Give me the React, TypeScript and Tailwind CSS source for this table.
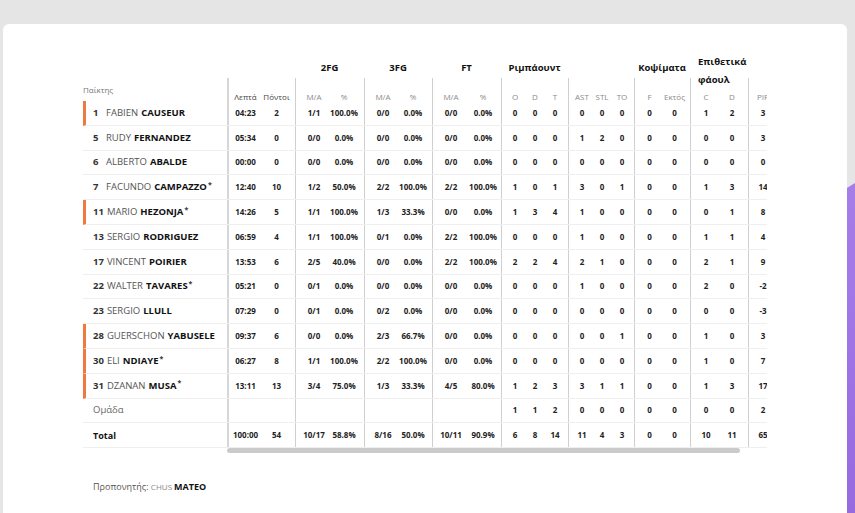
type Group = {
  label: string;
  w: string;
  box: string;
  cell: string;
  heads: string[];
  dark?: boolean;
  left?: boolean;
};

const groups: Group[] = [
  { label: "", w: "w-[68px]", box: "border-l-2 border-[#d6d6d6] pl-[1px]", cell: "w-[31px]", heads: ["Λεπτά", "Πόντοι"], dark: true },
  { label: "2FG", w: "w-[69px]", box: "border-l border-[#cfcfcf] pl-[3px]", cell: "w-[30px]", heads: ["M/A", "%"] },
  { label: "3FG", w: "w-[68px]", box: "border-l border-[#cfcfcf] pl-[3px]", cell: "w-[30px]", heads: ["M/A", "%"] },
  { label: "FT", w: "w-[69px]", box: "border-l border-[#cfcfcf] pl-[2px]", cell: "w-[32px]", heads: ["M/A", "%"] },
  { label: "Ριμπάουντ", w: "w-[67px]", box: "border-l border-[#cfcfcf] pl-[3px]", cell: "w-[20px]", heads: ["O", "D", "T"] },
  { label: "", w: "w-[66px]", box: "border-l border-[#cfcfcf] pl-[3px]", cell: "w-[20px]", heads: ["AST", "STL", "TO"] },
  { label: "Κοψίματα", w: "w-[56px]", box: "border-l border-[#cfcfcf] pl-[2px]", cell: "w-[25px]", heads: ["F", "Εκτός"] },
  { label: "Επιθετικά φάουλ", w: "w-[58px]", box: "border-l border-[#cfcfcf] pl-[2px]", cell: "w-[26px]", heads: ["C", "D"], left: true },
  { label: "", w: "w-[47px]", box: "border-l border-[#cfcfcf]", cell: "w-[28px]", heads: ["PIR"] },
];

type Row = {
  no?: string;
  first?: string;
  last: string;
  star?: boolean;
  bar?: boolean;
  kind?: "team" | "total";
  v: string[];
};

const rows: Row[] = [
  { no: "1", first: "FABIEN", last: "CAUSEUR", bar: true, v: ["04:23", "2", "1/1", "100.0%", "0/0", "0.0%", "0/0", "0.0%", "0", "0", "0", "0", "0", "0", "0", "0", "1", "2", "3"] },
  { no: "5", first: "RUDY", last: "FERNANDEZ", v: ["05:34", "0", "0/0", "0.0%", "0/0", "0.0%", "0/0", "0.0%", "0", "0", "0", "1", "2", "0", "0", "0", "0", "0", "3"] },
  { no: "6", first: "ALBERTO", last: "ABALDE", v: ["00:00", "0", "0/0", "0.0%", "0/0", "0.0%", "0/0", "0.0%", "0", "0", "0", "0", "0", "0", "0", "0", "0", "0", "0"] },
  { no: "7", first: "FACUNDO", last: "CAMPAZZO", star: true, v: ["12:40", "10", "1/2", "50.0%", "2/2", "100.0%", "2/2", "100.0%", "1", "0", "1", "3", "0", "1", "0", "0", "1", "3", "14"] },
  { no: "11", first: "MARIO", last: "HEZONJA", star: true, bar: true, v: ["14:26", "5", "1/1", "100.0%", "1/3", "33.3%", "0/0", "0.0%", "1", "3", "4", "1", "0", "0", "0", "0", "0", "1", "8"] },
  { no: "13", first: "SERGIO", last: "RODRIGUEZ", v: ["06:59", "4", "1/1", "100.0%", "0/1", "0.0%", "2/2", "100.0%", "0", "0", "0", "1", "0", "0", "0", "0", "1", "1", "4"] },
  { no: "17", first: "VINCENT", last: "POIRIER", v: ["13:53", "6", "2/5", "40.0%", "0/0", "0.0%", "2/2", "100.0%", "2", "2", "4", "2", "1", "0", "0", "0", "2", "1", "9"] },
  { no: "22", first: "WALTER", last: "TAVARES", star: true, v: ["05:21", "0", "0/1", "0.0%", "0/0", "0.0%", "0/0", "0.0%", "0", "0", "0", "1", "0", "0", "0", "0", "2", "0", "-2"] },
  { no: "23", first: "SERGIO", last: "LLULL", v: ["07:29", "0", "0/1", "0.0%", "0/2", "0.0%", "0/0", "0.0%", "0", "0", "0", "0", "0", "0", "0", "0", "0", "0", "-3"] },
  { no: "28", first: "GUERSCHON", last: "YABUSELE", bar: true, v: ["09:37", "6", "0/0", "0.0%", "2/3", "66.7%", "0/0", "0.0%", "0", "0", "0", "0", "0", "1", "0", "0", "1", "0", "3"] },
  { no: "30", first: "ELI", last: "NDIAYE", star: true, bar: true, v: ["06:27", "8", "1/1", "100.0%", "2/2", "100.0%", "0/0", "0.0%", "0", "0", "0", "0", "0", "0", "0", "0", "1", "0", "7"] },
  { no: "31", first: "DZANAN", last: "MUSA", star: true, bar: true, v: ["13:11", "13", "3/4", "75.0%", "1/3", "33.3%", "4/5", "80.0%", "1", "2", "3", "3", "1", "1", "0", "0", "1", "3", "17"] },
  { last: "Ομάδα", kind: "team", v: ["", "", "", "", "", "", "", "", "1", "1", "2", "0", "0", "0", "0", "0", "0", "0", "2"] },
  { last: "Total", kind: "total", v: ["100:00", "54", "10/17", "58.8%", "8/16", "50.0%", "10/11", "90.9%", "6", "8", "14", "11", "4", "3", "0", "0", "10", "11", "65"] },
];

function NameCell({ r }: { r: Row }) {
  if (r.kind === "team") return <span className="text-[9.5px] text-[#666]">{r.last}</span>;
  if (r.kind === "total") return <span className="text-[9px] font-bold text-[#111]">{r.last}</span>;
  return (
    <span className="flex items-center whitespace-nowrap text-[9.5px]">
      <span className="mr-[3px] inline-block min-w-[10px] font-bold text-[#333]">{r.no}</span>
      <span className="text-[#555]">{r.first}</span>
      <span className="ml-[3px] font-bold text-[#111]">{r.last}</span>
      {r.star && <span className="-mt-[4px] ml-[1px] text-[7px] font-bold text-[#333]">*</span>}
    </span>
  );
}

function StatRow({ r }: { r: Row }) {
  let i = 0;
  return (
    <div className="flex h-[24.8px] border-b border-[#efefef]">
      {groups.map((g, gi) => (
        <div key={gi} className={`flex shrink-0 items-center ${g.w} ${g.box}`}>
          {g.heads.map((_, hi) => {
            const val = r.v[i++];
            return (
              <div key={hi} className={`${g.cell} text-center text-[8px] font-bold text-[#222]`}>
                {val}
              </div>
            );
          })}
        </div>
      ))}
      <div className="w-[19px] shrink-0" />
    </div>
  );
}

export default function App() {
  return (
    <div className="relative min-h-[513px] overflow-hidden bg-[#e5e5e5] font-['Open_Sans',sans-serif]">
      <svg className="absolute right-0 top-[150px] h-[363px] w-[60px]" viewBox="0 0 60 363" preserveAspectRatio="none">
        <defs>
          <linearGradient id="pg" x1="0" y1="0" x2="0" y2="1">
            <stop offset="0" stopColor="#a77de9" />
            <stop offset="1" stopColor="#976ae0" />
          </linearGradient>
        </defs>
        <polygon points="0,70 60,33 60,363 0,363" fill="url(#pg)" />
      </svg>

      <div className="relative z-10 ml-[3px] mr-[8px] mt-[24px] min-h-[489px] rounded-t-[6px] bg-white pt-[29px]">
        <div className="mx-auto w-[684px]">
          <div className="flex">
            {/* player names */}
            <div className="w-[144px] shrink-0">
              <div className="h-[25px]" />
              <div className="flex h-[23px] items-center text-[8px] text-[#777]">Παίκτης</div>
              {rows.map((r, idx) => (
                <div
                  key={idx}
                  className={`flex h-[24.8px] items-center border-b border-[#efefef] ${
                    r.bar ? "border-l-[3px] border-l-[#ef7a40] pl-[7px]" : "pl-[10px]"
                  }`}
                >
                  <NameCell r={r} />
                </div>
              ))}
            </div>

            {/* stats, scrolled sideways; the thumb below stands in for the scrollbar */}
            <div className="w-[540px]">
              <div className="overflow-hidden">
                <div className="w-[568px]">
                  <div className="flex h-[25px]">
                    {groups.map((g, gi) =>
                      g.left ? (
                        <div key={gi} className={`${g.w} shrink-0 pl-[8px] text-[9.5px] font-bold leading-[18px] text-[#111]`}>
                          <div className="w-[48px]">{g.label}</div>
                        </div>
                      ) : (
                        <div key={gi} className={`${g.w} flex shrink-0 items-end justify-center pb-[3px] text-[9.5px] font-bold leading-[14px] text-[#111]`}>
                          {g.label}
                        </div>
                      )
                    )}
                    <div className="w-[19px] shrink-0" />
                  </div>
                  <div className="flex h-[23px]">
                    {groups.map((g, gi) => (
                      <div key={gi} className={`flex shrink-0 items-end ${g.w} ${g.box}`}>
                        {g.heads.map((h) => (
                          <div
                            key={h}
                            className={`${g.cell} -mb-[1px] text-center text-[8px] leading-[10px] ${g.dark ? "text-[#444]" : "text-[#8a8a8a]"}`}
                          >
                            {h}
                          </div>
                        ))}
                      </div>
                    ))}
                    <div className="w-[19px] shrink-0" />
                  </div>
                  {rows.map((r, idx) => (
                    <StatRow key={idx} r={r} />
                  ))}
                </div>
              </div>
              <div className="h-[5px] w-[513px] rounded-full bg-[#cbcbcb]" />
            </div>
          </div>

          <div className="mt-[27px] pl-[10px] text-[9px] leading-[14px]">
            <span className="text-[#555]">Προπονητής: </span>
            <span className="text-[8px] text-[#888]">CHUS </span>
            <span className="font-bold text-[#111]">MATEO</span>
          </div>
        </div>
      </div>
    </div>
  );
}
